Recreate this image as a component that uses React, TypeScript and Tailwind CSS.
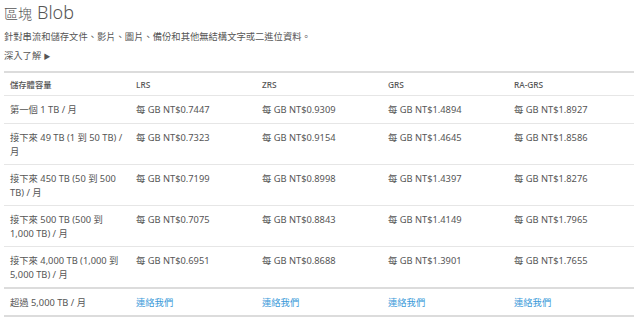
const rows: { label: string; prices: string[] }[] = [
  {
    label: "第一個 1 TB / 月",
    prices: ["每 GB NT$0.7447", "每 GB NT$0.9309", "每 GB NT$1.4894", "每 GB NT$1.8927"],
  },
  {
    label: "接下來 49 TB (1 到 50 TB) / 月",
    prices: ["每 GB NT$0.7323", "每 GB NT$0.9154", "每 GB NT$1.4645", "每 GB NT$1.8586"],
  },
  {
    label: "接下來 450 TB (50 到 500 TB) / 月",
    prices: ["每 GB NT$0.7199", "每 GB NT$0.8998", "每 GB NT$1.4397", "每 GB NT$1.8276"],
  },
  {
    label: "接下來 500 TB (500 到 1,000 TB) / 月",
    prices: ["每 GB NT$0.7075", "每 GB NT$0.8843", "每 GB NT$1.4149", "每 GB NT$1.7965"],
  },
  {
    label: "接下來 4,000 TB (1,000 到 5,000 TB) / 月",
    prices: ["每 GB NT$0.6951", "每 GB NT$0.8688", "每 GB NT$1.3901", "每 GB NT$1.7655"],
  },
];

const tiers = ["LRS", "ZRS", "GRS", "RA-GRS"];

export default function App() {
  return (
    <div className="min-h-[318px] bg-white px-1 text-[#555] font-['Noto_Sans','Noto_Sans_CJK_TC',sans-serif]">
      <h1 className="flex items-baseline gap-[5px] pt-[1px] leading-[22px] font-light text-[#555]">
        <span className="text-[14px]">區塊</span>
        <span className="text-[18px]">Blob</span>
      </h1>
      <p className="mt-[5px] text-[9.3px] leading-[14px]">
        針對串流和儲存文件、影片、圖片、備份和其他無結構文字或二進位資料。
      </p>
      <p className="mt-[5px] text-[9.3px] leading-[14px]">
        深入了解 <span className="text-[7px]">▶</span>
      </p>

      <table className="mt-[7px] w-[630px] table-fixed border-collapse border-t-2 border-[#dcdcdc] text-[9.3px] leading-[14px]">
        <thead>
          <tr className="border-b border-[#e6e6e6]">
            <th className="w-[126px] pl-[6px] pr-[4px] pt-[5px] pb-[3px] text-left text-[8.3px] font-medium text-[#555]">
              儲存體容量
            </th>
            {tiers.map((t) => (
              <th
                key={t}
                className="w-[126px] pl-[6px] pr-[4px] pt-[5px] pb-[3px] text-left text-[8.3px] font-medium text-[#555]"
              >
                {t}
              </th>
            ))}
          </tr>
        </thead>
        <tbody>
          {rows.map((r, i) => {
            const pad =
              i === 0
                ? "pl-[6px] pr-[4px] pt-[7px] pb-[6px] align-top"
                : "pl-[6px] pr-[4px] pt-[7px] pb-[5px] align-top";
            return (
              <tr
                key={r.label}
                className={i === rows.length - 1 ? "border-b-2 border-[#dcdcdc]" : "border-b border-[#e6e6e6]"}
              >
                <td className={pad}>{r.label}</td>
                {r.prices.map((p) => (
                  <td key={p} className={pad}>
                    {p}
                  </td>
                ))}
              </tr>
            );
          })}
          <tr className="border-b-2 border-[#dcdcdc]">
            <td className="pl-[6px] pr-[4px] pt-[7px] pb-[5px] align-top">超過 5,000 TB / 月</td>
            {tiers.map((t) => (
              <td key={t} className="pl-[6px] pr-[4px] pt-[7px] pb-[5px] align-top">
                <a href="#" className="text-[#3a9ad9]">
                  連絡我們
                </a>
              </td>
            ))}
          </tr>
        </tbody>
      </table>
    </div>
  );
}
